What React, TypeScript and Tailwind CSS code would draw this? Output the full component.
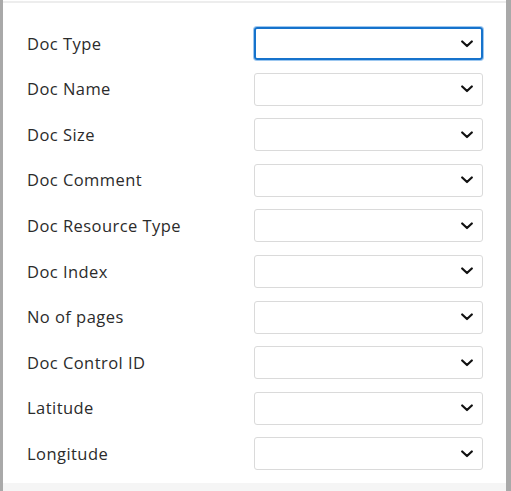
const fields = [
  "Doc Type",
  "Doc Name",
  "Doc Size",
  "Doc Comment",
  "Doc Resource Type",
  "Doc Index",
  "No of pages",
  "Doc Control ID",
  "Latitude",
  "Longitude",
];

const Chevron = () => (
  <svg width="12" height="8" viewBox="0 0 12 8" fill="none">
    <path d="M1.2 1.5 L6 6 L10.8 1.5" stroke="#111" strokeWidth="2.2" strokeLinecap="round" strokeLinejoin="round" />
  </svg>
);

const App = () => {
  return (
    <div className="flex h-[491px] w-full bg-[#a9a9a9]" style={{fontFamily: '"Open Sans", sans-serif'}}>
      <div className="w-[3px] bg-[#a9a9a9]"></div>

      <div className="flex flex-1 flex-col bg-white">
        <div className="mt-px h-[2px] bg-[#ededed]"></div>

        <div className="flex flex-1 flex-col gap-[12.6px] pt-[24px] pl-[24px]">
          {fields.map((label, i) => (
            <div key={label} className="flex h-[33px] items-center">
              <div className="w-[227px] pt-px text-[16.5px] tracking-[0.45px] text-[#2b2b2b]">{label}</div>
              {i === 0 ? (
                <div className="flex h-[33px] w-[229px] items-center justify-end rounded-[3px] border-2 border-[#1673cc] pr-[8px] shadow-[0_0_0_1px_#9cc7f0]">
                  <Chevron/>
                </div>
              ) : (
                <div className="flex h-[33px] w-[229px] items-center justify-end rounded-[3px] border border-[#dadada] pr-[9px]">
                  <Chevron/>
                </div>
              )}
            </div>
          ))}
        </div>

        <div className="h-[8px] bg-[#f5f5f5]"></div>
      </div>

      <div className="w-[5px] bg-[#a9a9a9]"></div>
    </div>
  );
};

export default App;
